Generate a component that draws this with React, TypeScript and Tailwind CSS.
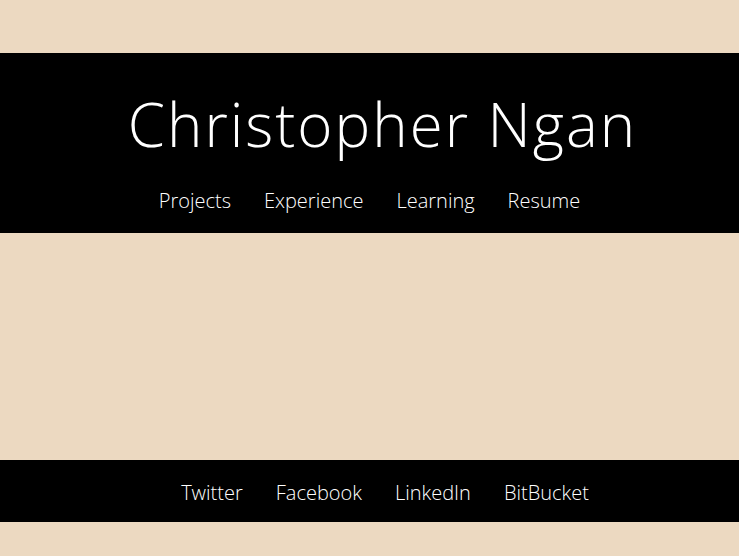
export default function App() {
  const font = { fontFamily: '"Open Sans", "Noto Sans", sans-serif' };
  return (
    <div className="min-h-[556px] w-full bg-[#ecd9c1] pt-[53px] font-light text-white" style={font}>
      <header className="flex h-[180px] flex-col items-center bg-black">
        <h1 className="mt-[35px] pl-[26px] text-[60px] leading-[72px] font-light tracking-[2px]">Christopher Ngan</h1>
        <nav className="mt-[27px] flex gap-[33px] text-[20px] leading-[28px] font-light">
          <a>Projects</a>
          <a>Experience</a>
          <a>Learning</a>
          <a>Resume</a>
        </nav>
      </header>
      <div className="h-[227px]" />
      <footer className="flex h-[62px] items-start justify-center bg-black pl-[31px] pt-[18px] text-[20px] leading-[30px] font-light">
        <div className="flex gap-[33px]">
          <a>Twitter</a>
          <a>Facebook</a>
          <a>LinkedIn</a>
          <a>BitBucket</a>
        </div>
      </footer>
    </div>
  );
}
